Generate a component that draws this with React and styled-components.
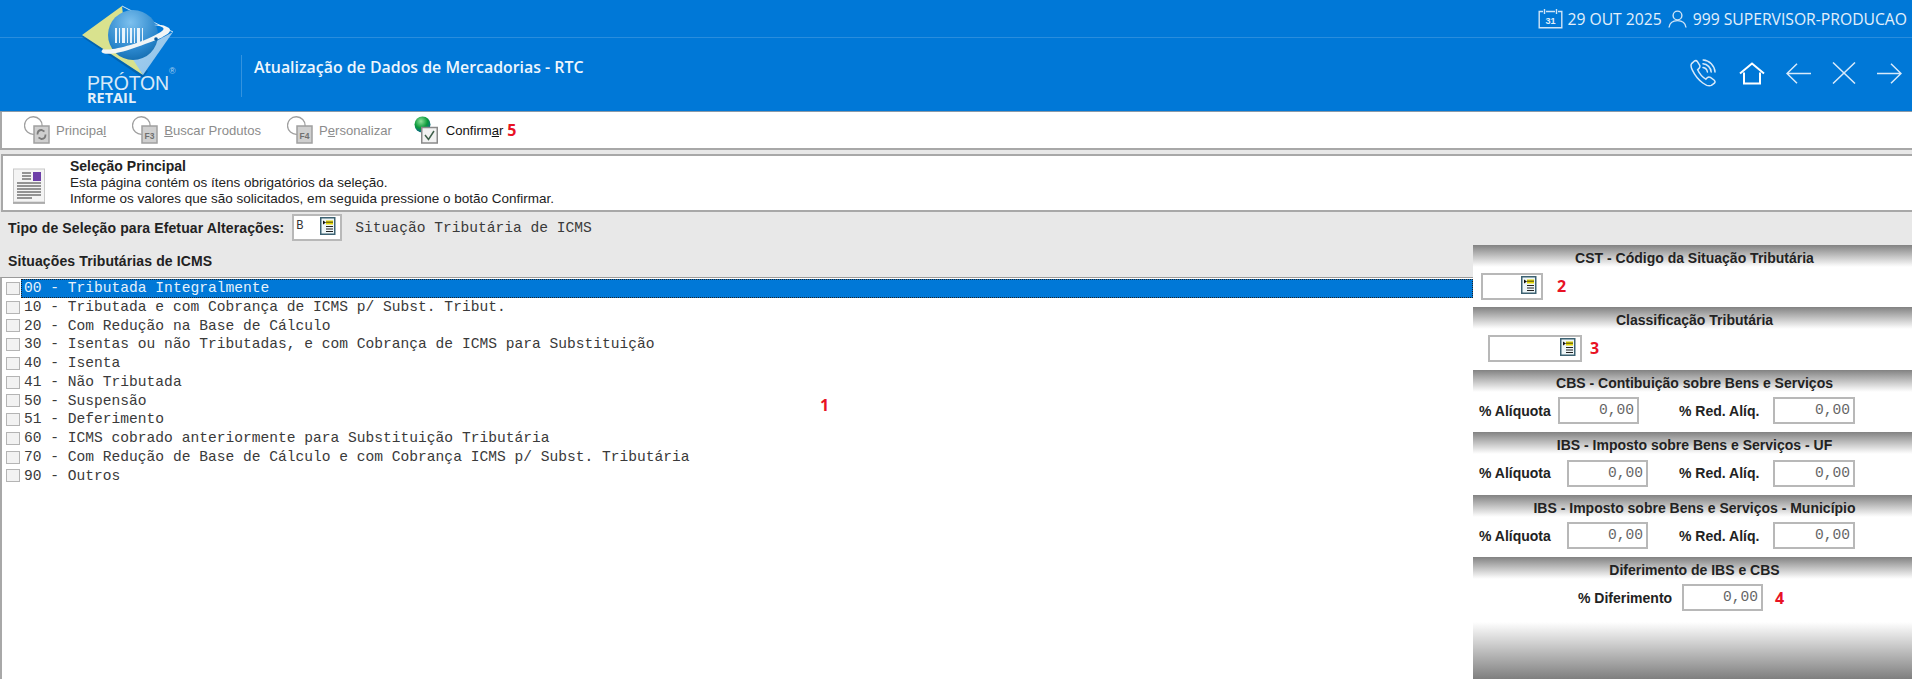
import React from 'react';
import styled, {createGlobalStyle} from 'styled-components';

const GlobalStyle = createGlobalStyle`
  html, body {
    margin: 0;
    padding: 0;
    background: #e8e8e8;
    overflow: hidden;
  }
  * { box-sizing: border-box; }
`;

const SANS = '"Liberation Sans", Arial, sans-serif';
const MONO = '"Liberation Mono", "Courier New", monospace';

const Page = styled.div`
  width: 1912px;
  height: 679px;
  display: flex;
  flex-direction: column;
  font-family: ${SANS};
  background: #e8e8e8;
  overflow: hidden;
`;

// blue header
const Header = styled.header`
  position: relative;
  height: 112px;
  flex: none;
  background: #0078d7;
  color: #fff;
  border-bottom: 1px solid #8a9aa8;
`;
const TopBar = styled.div`
  height: 38px;
  display: flex;
  align-items: center;
  justify-content: flex-end;
  padding: 0 5px 0 0;
  border-bottom: 1px solid rgba(255, 255, 255, .16);
  font-family: "Open Sans", sans-serif;
  font-size: 15.7px;
  color: #e3f0fb;
`;
const TopItem = styled.span`
  display: flex;
  align-items: center;
  gap: ${props => props.$gap}px;
  margin-left: 6px;
`;
const MainBar = styled.div`
  height: 73px;
  display: flex;
  align-items: flex-start;
  padding: 17px 10px 0 241px;
`;
const Separator = styled.div`
  width: 1px;
  height: 42px;
  background: rgba(255, 255, 255, .2);
`;
const Title = styled.h1`
  margin: 2px 0 0 12px;
  font-family: "Open Sans", sans-serif;
  font-size: 15.9px;
  line-height: 20px;
  font-weight: 600;
  color: #eef6fd;
`;
const NavIcons = styled.nav`
  margin-left: auto;
  display: flex;
  align-items: center;
  gap: 21px;
  height: 34px;
  margin-top: 1px;
`;
const LogoBox = styled.div`
  position: absolute;
  left: 82px;
  top: 5px;
  width: 100px;
  height: 100px;
`;
const LogoName = styled.div`
  position: absolute;
  left: 5px;
  top: 70px;
  font-family: "Liberation Sans", sans-serif;
  font-size: 19.5px;
  line-height: 16px;
  letter-spacing: -.2px;
  color: #d7e9f8;
`;
const LogoSub = styled.div`
  position: absolute;
  left: 5px;
  top: 86px;
  font-family: "Open Sans", sans-serif;
  font-size: 14.5px;
  line-height: 13px;
  font-weight: 700;
  color: #e4f0fa;
`;
const LogoReg = styled.div`
  position: absolute;
  left: 87px;
  top: 61px;
  font-size: 9px;
  line-height: 10px;
  color: #a9d0ef;
`;

// toolbar
const Toolbar = styled.div`
  height: 38px;
  flex: none;
  display: flex;
  align-items: center;
  gap: 26px;
  padding-left: 22px;
  background: #fff;
  border-left: 2px solid #a8a8a8;
  border-bottom: 2px solid #a8a8a8;
`;
const ToolButton = styled.div`
  display: flex;
  align-items: center;
  gap: 6px;
  margin-left: ${props => props.$active ? '-4px' : '0'};
  font-size: 13.1px;
  color: ${props => props.$active ? '#111' : '#8c8c8c'};
`;
const Mark = styled.span`
  font-family: "Open Sans", sans-serif;
  font-weight: 700;
  font-size: 16px;
  line-height: 20px;
  color: #e81224;
`;
const ToolMark = styled(Mark)`
  margin-left: -22px;
`;

// description panel
const InfoPanel = styled.section`
  height: 58px;
  flex: none;
  margin: 4px 0 0 1px;
  display: flex;
  background: #fff;
  border: 2px solid #a8a8a8;
  border-right: none;
  padding: 2px 0 0 9px;
`;
const InfoIcon = styled.div`
  width: 58px;
  padding-top: 10px;
`;
const InfoText = styled.div`
  font-size: 13.5px;
  line-height: 16.5px;
  color: #222;
`;
const InfoTitle = styled.div`
  font-weight: 700;
  font-size: 14px;
  color: #222;
`;

const SelectionRow = styled.div`
  height: 33px;
  flex: none;
  display: flex;
  align-items: center;
  padding: 0 0 2px 8px;
`;
const BoldLabel = styled.span`
  font-weight: 700;
  font-size: 14px;
  letter-spacing: .12px;
  color: #222;
`;
const MonoText = styled.span`
  font-family: ${MONO};
  font-size: 14.6px;
  color: #3a3a3a;
`;
const TypeValue = styled(MonoText)`
  margin-left: 13px;
`;

// inputs
const Field = styled.div`
  width: ${props => props.$width}px;
  height: 27px;
  flex: none;
  display: flex;
  align-items: flex-start;
  justify-content: ${props => props.$start ? 'space-between' : 'flex-end'};
  padding: 2px 3px 0;
  background: #fff;
  border: 2px solid #b8b8b8;
  font-family: ${MONO};
  font-size: 14.6px;
  line-height: 18px;
  color: #666;
`;
const LookupField = styled(Field)`
  padding: 1px 4px 0 2px;
`;
const TypeField = styled(LookupField)`
  margin-left: 8px;
  font-size: 12px;
  color: #333;
`;

const Content = styled.div`
  flex: 1;
  min-height: 0;
  display: flex;
`;
const LeftColumn = styled.div`
  width: 1473px;
  flex: none;
  display: flex;
  flex-direction: column;
`;
const ListTitle = styled.div`
  height: 32px;
  flex: none;
  display: flex;
  align-items: center;
  padding-left: 8px;
`;
const List = styled.div`
  position: relative;
  flex: 1;
  padding-top: 1px;
  background: #fff;
  border-top: 1px solid #9a9a9a;
  border-left: 2px solid #a8a8a8;
`;
const Row = styled.div`
  height: 18.75px;
  display: flex;
  align-items: center;
  gap: 1px;
  padding-left: 4px;
`;
const Check = styled.span`
  width: 14px;
  height: 13px;
  flex: none;
  background: #f2f2f2;
  border: 1px solid #b4b4b4;
`;
const RowText = styled.span`
  flex: 1;
  height: 18.75px;
  padding-left: 3px;
  font-family: ${MONO};
  font-size: 14.6px;
  line-height: 18px;
  white-space: pre;
  color: ${props => props.$selected ? '#e6f2fc' : '#3a3a3a'};
  background: ${props => props.$selected ? '#0078d7' : 'transparent'};
  outline: ${props => props.$selected ? '1px dotted #222' : 'none'};
  outline-offset: -1px;
`;
const ListMark = styled(Mark)`
  position: absolute;
  left: 818px;
  top: 117px;
`;

// right panel
const SidePanel = styled.aside`
  width: 439px;
  flex: none;
  display: flex;
  flex-direction: column;
  background: #fff;
`;
const Block = styled.div`
  height: ${props => props.$height || 62.4}px;
  flex: none;
`;
const BlockTitle = styled.div`
  height: 22px;
  padding: 5px 0 0 4px;
  text-align: center;
  font-weight: 700;
  font-size: 14px;
  line-height: 16px;
  color: #222;
  background: linear-gradient(to bottom, #828282, #a8a8a8 30%, #f4f4f4 90%, #fff);
`;
const BlockBody = styled.div`
  height: 38px;
  display: flex;
  align-items: center;
  padding-left: ${props => props.$indent}px;
`;
const FieldLabel = styled.span`
  width: ${props => props.$width}px;
  flex: none;
  font-weight: 700;
  font-size: 14px;
  color: #222;
`;
const Spacer = styled.div`
  width: ${props => props.$width}px;
  flex: none;
`;
const SideMark = styled(Mark)`
  margin-left: ${props => props.$left}px;
`;
const BottomFade = styled.div`
  flex: 1;
  background: linear-gradient(to bottom, #fff, #7f7f7f);
`;
const Underline = styled.span`
  text-decoration: underline;
`;

const CalendarIcon = () => (
  <svg width="25" height="21" viewBox="0 0 25 21" fill="none" stroke="#cfe4f6" strokeWidth="1.4">
    <path d="M5 3.5H1.2V19.8H23.8V3.5H20M8 3.5H17" />
    <path d="M6.5 1V6M18.5 1V6" />
    <text x="12.5" y="16" textAnchor="middle" fontSize="9" fontWeight="700" fontFamily={SANS} fill="#e3f0fb" stroke="none">31</text>
  </svg>
);
const UserIcon = () => (
  <svg width="19" height="18" viewBox="0 0 19 18" fill="none" stroke="#cfe4f6" strokeWidth="1.4">
    <circle cx="9.5" cy="5.5" r="4.4" />
    <path d="M1 17.5C1.6 12.8 4.6 10.6 9.5 10.6S17.4 12.8 18 17.5" />
  </svg>
);
const PhoneIcon = () => (
  <svg width="28" height="28" viewBox="0 0 28 28" fill="none" stroke="#d8eafa" strokeWidth="1.5" strokeLinecap="round">
    <path d="M4.2 2.2 1.6 4.6C.6 6 1 8.4 2.4 11.2 4.4 15.4 8 20.6 12.8 24 16 26.4 19.2 27.4 21.4 26.4L24.4 24.2C25.4 23 25.2 22 24 21L20.4 18.4C19.2 17.6 18.2 17.8 17.2 18.8L15.8 20.2C12.8 18.4 9.4 14.6 7.6 10.8L9 9.4C10 8.4 10.2 7.4 9.6 6.2L7.4 2.6C6.6 1.4 5.4 1.4 4.2 2.2Z" />
    <path d="M13 8.6C15.4 9 17 10.6 17.4 13" />
    <path d="M13 4.8C17.4 5.2 20.8 8.6 21.2 13" />
    <path d="M13.2 1C19.4 1.4 24.6 6.6 25 13" />
  </svg>
);
const HomeIcon = () => (
  <svg width="26" height="23" viewBox="0 0 26 23" fill="none" stroke="#fff" strokeWidth="2">
    <path d="M1 11.5 13 1.5 25 11.5" />
    <path d="M5 10.5V21.5H21V10.5" />
  </svg>
);
const BackIcon = () => (
  <svg width="25" height="21" viewBox="0 0 25 21" fill="none" stroke="#d8eafa" strokeWidth="1.5">
    <path d="M25 10.5H1M11 .8 1 10.5 11 20.2" />
  </svg>
);
const CloseIcon = () => (
  <svg width="24" height="22" viewBox="0 0 24 22" fill="none" stroke="#d8eafa" strokeWidth="1.5">
    <path d="M1 .5 23 21.5M23 .5 1 21.5" />
  </svg>
);
const ForwardIcon = () => (
  <svg width="25" height="21" viewBox="0 0 25 21" fill="none" stroke="#d8eafa" strokeWidth="1.5">
    <path d="M0 10.5H24M14 .8 24 10.5 14 20.2" />
  </svg>
);

const LogoMark = () => (
  <svg width="100" height="75" viewBox="0 0 100 75">
    <defs>
      <radialGradient id="ball" cx=".45" cy=".25" r=".85">
        <stop offset="0" stopColor="#7cc0ee" />
        <stop offset=".65" stopColor="#2a86cc" />
        <stop offset="1" stopColor="#0f66a8" />
      </radialGradient>
      <linearGradient id="side" x1="0" y1="0" x2="1" y2="1">
        <stop offset="0" stopColor="#a9d2f0" />
        <stop offset="1" stopColor="#8cc0e8" />
      </linearGradient>
    </defs>
    <path d="M0 32 61 73 66 66 6 27Z" fill="#064e88" opacity=".5" />
    <path d="M40 1 0 30 61 70 44 36Z" fill="#d9e28e" />
    <path d="M48 50 91 27 61 70Z" fill="url(#side)" />
    <path d="M40 1 91 27" stroke="#cfe6f7" strokeWidth="1" fill="none" />
    <circle cx="51" cy="30" r="25" fill="url(#ball)" />
    <path d="M33 23h2v15h-2zM37 23h1v15h-1zM40 23h3v15h-3zM45 23h1v15h-1zM48 23h2v15h-2zM52 23h1v15h-1zM55 23h3v15h-3zM60 23h1v14h-1z" fill="#e8f4fc" />
    <path d="M21 44C14 51 34 50 52 43 72 36 93 29 87 23 83 20 77 19 72 20 80 21 84 23 80 26 72 32 52 40 36 43 30 44.5 25 45 21 44Z" fill="#f1f5f6" />
    <circle cx="74" cy="34" r="1.8" fill="#0a5a9c" />
  </svg>
);

const LookupIcon = () => (
  <svg width="16" height="18" viewBox="0 0 16 18">
    <rect x=".75" y=".75" width="14" height="16.5" fill="#eef6f8" stroke="#3d6272" strokeWidth="1.5" />
    <path d="M3 3.5 6 5.5 3 7.5Z" fill="#111" />
    <path d="M6 3.5H13V7.5H6Z" fill="#e6d800" />
    <path d="M6 5.2H13" stroke="#222" strokeWidth=".8" />
    <path d="M6 9.5H13M6 12H13M6 14.5H13" stroke="#222" strokeWidth="1.2" />
  </svg>
);

const DocIcon = () => (
  <svg width="34" height="36" viewBox="0 0 34 36">
    <rect x="1.5" y="1" width="31" height="33" fill="#f4f4f4" stroke="#c8c8c8" />
    <path d="M1 35H33" stroke="#999" strokeWidth="1.5" />
    <rect x="21" y="4" width="8" height="9" fill="#6d3fa8" />
    <path d="M10 5H19M10 8H19M10 11H19M5 15H29M5 18H29M5 21H29M5 24H29M5 27H29M5 30H20" stroke="#333" strokeWidth="1" />
  </svg>
);

const ToolIcon = ({label}) => (
  <svg width="26" height="28" viewBox="0 0 26 28" fill="none">
    <path d="M10 18.3A8.8 8.8 0 1 1 18.1 10" stroke="#a0a0a0" strokeWidth="1.3" />
    <rect x="10" y="10" width="15" height="17" fill="#cfcfcf" stroke="#a0a0a0" strokeWidth="1.5" />
    {label
      ? <text x="17.5" y="23" textAnchor="middle" fontSize="8.5" fontWeight="700" fontFamily={SANS} fill="#707070">{label}</text>
      : <path d="M13.5 18.5C13.5 15.5 15.5 14 17.5 14L20.5 15.5M21.5 18.5C21.5 21.5 19.5 23 17.5 23L14.5 21.5" stroke="#7a7a7a" strokeWidth="1.8" />}
  </svg>
);
const ConfirmIcon = () => (
  <svg width="26" height="28" viewBox="0 0 26 28">
    <defs>
      <radialGradient id="globe" cx=".4" cy=".3" r=".75">
        <stop offset="0" stopColor="#8fe29a" />
        <stop offset=".55" stopColor="#0a9a3a" />
        <stop offset="1" stopColor="#0d5f9a" />
      </radialGradient>
    </defs>
    <circle cx="8.5" cy="8.5" r="8" fill="url(#globe)" />
    <rect x="7.75" y="11.5" width="15.5" height="15.5" fill="#f2f2f2" stroke="#8a8a8a" strokeWidth="1.5" />
    <path d="M11 19 14.5 23.5 20 15" fill="none" stroke="#3f5f4a" strokeWidth="1.5" />
  </svg>
);

const situacoes = [
  '00 - Tributada Integralmente',
  '10 - Tributada e com Cobrança de ICMS p/ Subst. Tribut.',
  '20 - Com Redução na Base de Cálculo',
  '30 - Isentas ou não Tributadas, e com Cobrança de ICMS para Substituição',
  '40 - Isenta',
  '41 - Não Tributada',
  '50 - Suspensão',
  '51 - Deferimento',
  '60 - ICMS cobrado anteriormente para Substituição Tributária',
  '70 - Com Redução de Base de Cálculo e com Cobrança ICMS p/ Subst. Tributária',
  '90 - Outros',
];

const RatesRow = ({first}) => (
  <BlockBody $indent={6}>
    <FieldLabel $width={first}>% Alíquota</FieldLabel>
    <Field $width={81}>0,00</Field>
    <Spacer $width={119 - first} />
    <FieldLabel $width={94}>% Red. Alíq.</FieldLabel>
    <Field $width={82}>0,00</Field>
  </BlockBody>
);

const App = () => (
  <Page>
    <GlobalStyle />
    <Header>
      <TopBar>
        <TopItem $gap={4}><CalendarIcon />29 OUT 2025</TopItem>
        <TopItem $gap={6}><UserIcon />999 SUPERVISOR-PRODUCAO</TopItem>
      </TopBar>
      <MainBar>
        <Separator />
        <Title>Atualização de Dados de Mercadorias - RTC</Title>
        <NavIcons>
          <PhoneIcon />
          <HomeIcon />
          <BackIcon />
          <CloseIcon />
          <ForwardIcon />
        </NavIcons>
      </MainBar>
      <LogoBox>
        <LogoMark />
        <LogoName>PRÓTON</LogoName>
        <LogoSub>RETAIL</LogoSub>
        <LogoReg>®</LogoReg>
      </LogoBox>
    </Header>

    <Toolbar>
      <ToolButton><ToolIcon /><span>Principa<Underline>l</Underline></span></ToolButton>
      <ToolButton><ToolIcon label="F3" /><span><Underline>B</Underline>uscar Produtos</span></ToolButton>
      <ToolButton><ToolIcon label="F4" /><span>P<Underline>e</Underline>rsonalizar</span></ToolButton>
      <ToolButton $active><ConfirmIcon /><span>Confirm<Underline>a</Underline>r</span></ToolButton>
      <ToolMark>5</ToolMark>
    </Toolbar>

    <InfoPanel>
      <InfoIcon><DocIcon /></InfoIcon>
      <InfoText>
        <InfoTitle>Seleção Principal</InfoTitle>
        <div>Esta página contém os ítens obrigatórios da seleção.</div>
        <div>Informe os valores que são solicitados, em seguida pressione o botão Confirmar.</div>
      </InfoText>
    </InfoPanel>

    <SelectionRow>
      <BoldLabel>Tipo de Seleção para Efetuar Alterações:</BoldLabel>
      <TypeField $width={50} $start>B<LookupIcon /></TypeField>
      <TypeValue>Situação Tributária de ICMS</TypeValue>
    </SelectionRow>

    <Content>
      <LeftColumn>
        <ListTitle><BoldLabel>Situações Tributárias de ICMS</BoldLabel></ListTitle>
        <List>
          {situacoes.map((item, i) => (
            <Row key={item}>
              <Check />
              <RowText $selected={i === 0}>{item}</RowText>
            </Row>
          ))}
          <ListMark>1</ListMark>
        </List>
      </LeftColumn>

      <SidePanel>
        <Block>
          <BlockTitle>CST - Código da Situação Tributária</BlockTitle>
          <BlockBody $indent={8}>
            <LookupField $width={62}><LookupIcon /></LookupField>
            <SideMark $left={14}>2</SideMark>
          </BlockBody>
        </Block>
        <Block>
          <BlockTitle>Classificação Tributária</BlockTitle>
          <BlockBody $indent={15}>
            <LookupField $width={94}><LookupIcon /></LookupField>
            <SideMark $left={8}>3</SideMark>
          </BlockBody>
        </Block>
        <Block>
          <BlockTitle>CBS - Contibuição sobre Bens e Serviços</BlockTitle>
          <RatesRow first={79} />
        </Block>
        <Block>
          <BlockTitle>IBS - Imposto sobre Bens e Serviços - UF</BlockTitle>
          <RatesRow first={88} />
        </Block>
        <Block>
          <BlockTitle>IBS - Imposto sobre Bens e Serviços - Município</BlockTitle>
          <RatesRow first={88} />
        </Block>
        <Block $height={65}>
          <BlockTitle>Diferimento de IBS e CBS</BlockTitle>
          <BlockBody $indent={105}>
            <FieldLabel $width={104}>% Diferimento</FieldLabel>
            <Field $width={81}>0,00</Field>
            <SideMark $left={12}>4</SideMark>
          </BlockBody>
        </Block>
        <BottomFade />
      </SidePanel>
    </Content>
  </Page>
);

export default App;
